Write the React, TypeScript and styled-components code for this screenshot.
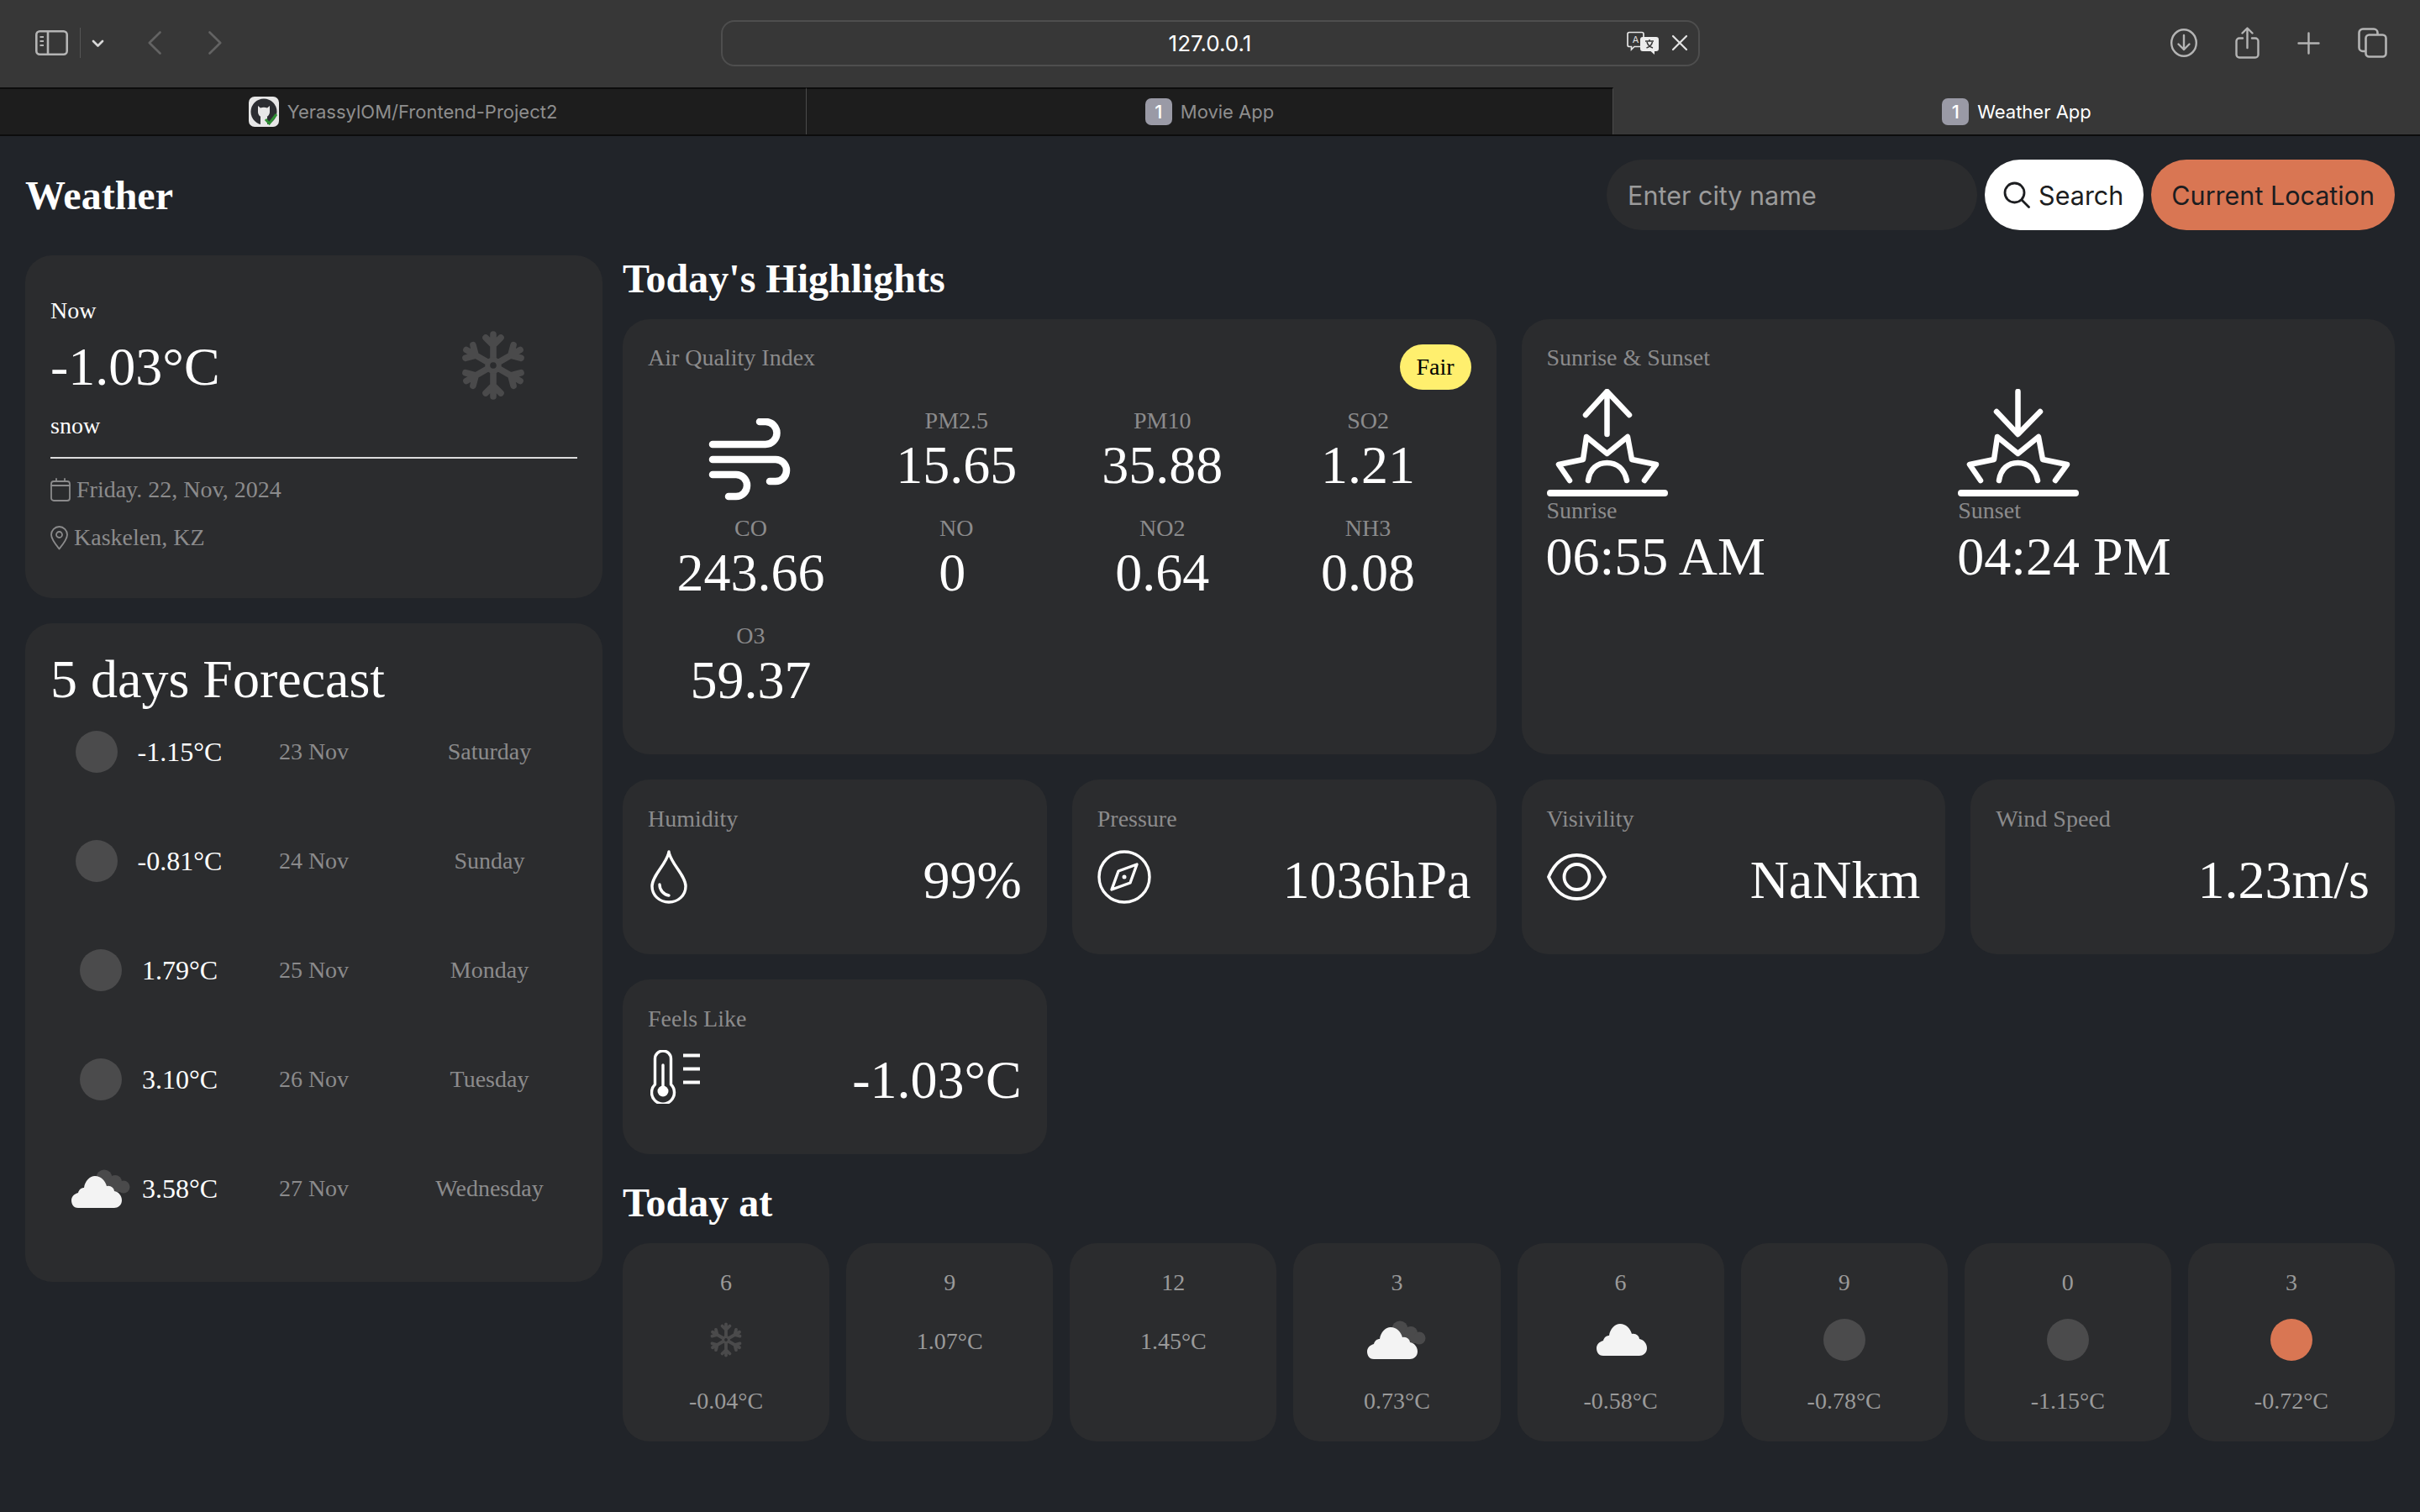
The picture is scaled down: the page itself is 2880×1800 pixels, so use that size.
import React from "react";
import styled, { createGlobalStyle } from "styled-components";

const SERIF = `"Liberation Serif", "Times New Roman", serif`;
const SANS = `Inter, "Liberation Sans", sans-serif`;
const GREY = "#8b8b8c";
const SUN_GREY = "#4b4b4c";
const ORANGE = "#d97653";

const Global = createGlobalStyle`
  html, body { margin: 0; padding: 0; background: #212429; }
  body { font-family: ${SERIF}; color: #fff; }
  * { box-sizing: border-box; }
`;

const Shell = styled.div`
  width: 2880px;
  height: 1800px;
  overflow: hidden;
  background: #212429;
`;

/* ---------- browser chrome ---------- */
const Toolbar = styled.div`
  height: 104px;
  background: #373737;
  display: grid;
  grid-template-columns: 1fr 1165px 1fr;
  align-items: center;
  padding-bottom: 2px;
`;
const ToolLeft = styled.div`
  display: flex;
  align-items: center;
  padding-left: 42px;
`;
const ToolRight = styled.div`
  display: flex;
  align-items: center;
  justify-content: flex-end;
  gap: 45px;
  padding-right: 39px;
`;
const ToolDivider = styled.span`
  width: 1px;
  height: 36px;
  background: #565656;
  margin: 0 13px 0 14px;
`;
const NavIcon = styled.svg<{ $left: number }>`
  margin-left: ${(p) => p.$left}px;
  display: block;
`;
const AddressBar = styled.div`
  height: 55px;
  border: 2px solid #4e4e4e;
  border-radius: 16px;
  display: grid;
  grid-template-columns: 1fr auto 1fr;
  align-items: center;
`;
const Url = styled.span`
  font: 400 26px ${SANS};
  letter-spacing: 0;
  color: #fff;
`;
const AddressActions = styled.div`
  display: flex;
  justify-content: flex-end;
  align-items: center;
  gap: 15px;
  padding-right: 12px;
`;
const TabBar = styled.div`
  height: 58px;
  display: grid;
  grid-template-columns: repeat(3, 1fr);
  border-bottom: 2px solid #0c0c0c;
`;
const Tab = styled.div<{ $active?: boolean }>`
  background: ${(p) => (p.$active ? "#373737" : "#1d1d1d")};
  border-top: 2px solid ${(p) => (p.$active ? "#373737" : "#0c0c0c")};
  border-right: ${(p) => (p.$active ? "0" : "1px solid #4a4a4a")};
  color: ${(p) => (p.$active ? "#fff" : "#8e8e8e")};
  display: flex;
  align-items: center;
  justify-content: center;
  gap: 10px;
  font: 400 22px ${SANS};
`;
const TabCount = styled.span`
  width: 32px;
  height: 32px;
  border-radius: 7px;
  background: #9a9aa6;
  color: #fff;
  font: 500 22px ${SANS};
  display: flex;
  align-items: center;
  justify-content: center;
`;

/* ---------- page ---------- */
const Header = styled.header`
  display: flex;
  align-items: center;
  justify-content: space-between;
  padding: 28px 30px 30px;
`;
const Brand = styled.h1`
  margin: 0;
  font: 700 48px ${SERIF};
`;
const SearchGroup = styled.div`
  display: flex;
  gap: 9px;
`;
const CityInput = styled.input`
  width: 441px;
  height: 84px;
  border: 0;
  outline: 0;
  border-radius: 42px;
  background: #2b2c2e;
  padding: 0 25px;
  color: #fff;
  font: 400 30.5px ${SANS};
  &::placeholder { color: #9b9b9b; opacity: 1; }
`;
const PillButton = styled.button<{ $accent?: boolean }>`
  height: 84px;
  border: 0;
  border-radius: 42px;
  padding: 0 24px 0 ${(p) => (p.$accent ? 24 : 22)}px;
  display: flex;
  align-items: center;
  gap: 10px;
  background: ${(p) => (p.$accent ? ORANGE : "#fff")};
  color: #1c1d20;
  font: 400 30.5px ${SANS};
`;
const Main = styled.main`
  display: grid;
  grid-template-columns: 687px 1fr;
  gap: 24px;
  padding: 0 30px;
  align-items: start;
`;
const LeftColumn = styled.aside`
  display: flex;
  flex-direction: column;
  gap: 30px;
`;
const RightColumn = styled.section`
  display: flex;
  flex-direction: column;
`;
const Card = styled.div`
  background: #2b2c2e;
  border-radius: 32px;
`;

/* now card */
const NowCard = styled(Card)`
  height: 408px;
  padding: 50px 30px 0;
`;
const NowTop = styled.div`
  display: flex;
  justify-content: space-between;
  align-items: center;
`;
const NowText = styled.div`
  display: flex;
  flex-direction: column;
`;
const NowSlot = styled.div`
  width: 200px;
  height: 160px;
  display: flex;
  align-items: center;
  justify-content: center;
  margin-bottom: 7px;
`;
const Small = styled.div<{ $top?: number }>`
  font-size: 28px;
  line-height: 32px;
  margin-top: ${(p) => p.$top ?? 0}px;
`;
const NowTemp = styled.div`
  font-size: 64px;
  line-height: 74px;
  margin-top: 14px;
`;
const Rule = styled.hr`
  border: 0;
  height: 2px;
  background: #dcdcdc;
  margin: 21px 0 21px;
`;
const MetaRow = styled.div<{ $top?: number; $gap: number }>`
  display: flex;
  align-items: center;
  gap: ${(p) => p.$gap}px;
  color: ${GREY};
  font-size: 28px;
  line-height: 32px;
  margin-top: ${(p) => p.$top ?? 0}px;
`;

/* forecast */
const ForecastCard = styled(Card)`
  height: 784px;
  padding: 30px 30px 0;
`;
const ForecastTitle = styled.h2`
  margin: 0 0 9px;
  font: 400 64px/74px ${SERIF};
`;
const ForecastList = styled.div`
  display: flex;
  flex-direction: column;
  gap: 50px;
`;
const ForecastRow = styled.div`
  display: grid;
  grid-template-columns: repeat(3, 1fr);
  align-items: center;
  height: 80px;
  text-align: center;
`;
const ForecastTemp = styled.div`
  display: flex;
  align-items: center;
  justify-content: center;
  gap: 9px;
  padding-left: 10px;
  font-size: 32px;
`;
const ForecastMuted = styled.div`
  font-size: 28px;
  color: ${GREY};
`;

/* highlights */
const SectionTitle = styled.h2`
  margin: 0 0 21px;
  padding-top: 1px;
  font: 700 48px/54px ${SERIF};
`;
const HighlightRow = styled.div`
  display: grid;
  grid-template-columns: 1fr 1fr;
  gap: 30px;
`;
const LargeCard = styled(Card)`
  height: 518px;
  padding: 30px 30px 0;
`;
const CardHead = styled.div`
  display: flex;
  justify-content: space-between;
  align-items: flex-start;
  margin-bottom: 21px;
`;
const Muted = styled.div`
  color: ${GREY};
  font-size: 28px;
  line-height: 32px;
`;
const Badge = styled.span`
  width: 85px;
  height: 54px;
  border-radius: 27px;
  background: #ffef6e;
  color: #000;
  font-size: 28px;
  display: flex;
  align-items: center;
  justify-content: center;
`;
const AirGrid = styled.div`
  display: grid;
  grid-template-columns: repeat(4, 1fr);
  row-gap: 22px;
  text-align: center;
`;
const WindSlot = styled.div`
  display: flex;
  justify-content: center;
  margin: 13px 0 -5px;
`;
const BigValue = styled.div<{ $shift?: number }>`
  font-size: 64px;
  line-height: 74px;
  padding-right: ${(p) => p.$shift ?? 0}px;
`;
const SunGrid = styled.div`
  display: grid;
  grid-template-columns: 1fr 1fr;
`;
const SunIconWrap = styled.svg`
  display: block;
  margin-bottom: 1px;
`;
const SunTime = styled(BigValue)`
  margin: 2px 0 0 -1px;
`;
const StatGrid = styled.div`
  display: grid;
  grid-template-columns: 1fr 1fr;
  gap: 30px;
`;
const StatCard = styled(Card)`
  height: 208px;
  padding: 31px 30px 0;
`;
const StatBody = styled.div`
  display: flex;
  justify-content: space-between;
  align-items: flex-start;
  margin-top: 20px;
  min-height: 74px;
`;
const StatValue = styled.div`
  font-size: 64px;
  line-height: 74px;
  margin-left: auto;
`;
const StatIcon = styled.svg<{ $left: number; $top: number }>`
  display: block;
  margin: ${(p) => p.$top}px 0 0 ${(p) => p.$left}px;
`;
const Spaced = styled.div`
  margin-top: 30px;
`;
const HourGrid = styled.div`
  display: grid;
  grid-template-columns: repeat(8, 1fr);
  gap: 20px;
`;
const HourCard = styled(Card)`
  height: 236px;
  padding-top: 31px;
  display: flex;
  flex-direction: column;
  align-items: center;
  color: #9a9a9a;
  font-size: 28px;
  line-height: 32px;
`;
const HourSlot = styled.div`
  height: 33px;
  margin: 35px 0 3px;
  display: flex;
  align-items: center;
  justify-content: center;
  svg { flex-shrink: 0; }
`;
const HourTemp = styled.div`
  margin-top: 38px;
`;

/* ---------- icons ---------- */
const Snow = ({ size }: { size: number }) => (
  <svg width={size} height={size} viewBox="0 0 80 80" fill="none" stroke="#4a4a4b" strokeWidth="3.8" strokeLinecap="round" strokeLinejoin="round">
    {[0, 60, 120, 180, 240, 300].map((a) => (
      <g key={a} transform={`rotate(${a} 40 40)`}>
        <path d="M40 36V21.5M35.5 23.5 40 28l4.5-4.5" />
      </g>
    ))}
    <circle cx="40" cy="40" r="3.4" strokeWidth="3" />
  </svg>
);
const Sun = ({ color }: { color: string }) => (
  <svg width="80" height="80" viewBox="0 0 80 80">
    <circle cx="40" cy="40" r="25" fill={color} />
  </svg>
);
const WHITE_CLOUD = "M13 63C7 63 5 58 5 54c0-5 4-8 8-9 1-4 4-6 7-6 1-8 7-14 13-14 7 0 12 5 14 12 5-1 9 3 9 6 5 1 9 5 9 11 0 6-5 9-9 9z";
const Clouds = () => (
  <svg width="80" height="80" viewBox="0 0 80 80">
    <g fill="#4a4a4b">
      <circle cx="44" cy="27" r="9.5" />
      <circle cx="57" cy="32" r="8" />
      <circle cx="67" cy="38" r="7.5" />
      <rect x="48" y="34" width="18" height="10" />
    </g>
    <path d={WHITE_CLOUD} fill="#f3f3f3" />
  </svg>
);
const Cloud = () => (
  <svg width="80" height="80" viewBox="0 0 80 80">
    <path d={WHITE_CLOUD} fill="#f3f3f3" transform="translate(6 -4)" />
  </svg>
);
const WeatherIcon = ({ kind }: { kind: string }) => {
  if (kind === "sun") return <Sun color={SUN_GREY} />;
  if (kind === "sunOrange") return <Sun color={ORANGE} />;
  if (kind === "clouds") return <Clouds />;
  if (kind === "cloud") return <Cloud />;
  if (kind === "snow") return <Snow size={80} />;
  return null;
};
const SunBurst = () => (
  <g>
    <path d="M27 109 14 90 43 84 47 57 71.5 77 96 57 101 84 130 90 116 109" />
    <path d="M49 109c2-14 11-21 22.5-21S92 95 95 109" />
    <path d="M4 124H140" strokeWidth="8" />
  </g>
);
const SunriseIcon = () => (
  <SunIconWrap width="144" height="128" viewBox="0 0 144 128" fill="none" stroke="#fff" strokeWidth="6.5" strokeLinecap="round" strokeLinejoin="round">
    <path d="M71.5 54V4M46 31 71.5 3 98 31" />
    <SunBurst />
  </SunIconWrap>
);
const SunsetIcon = () => (
  <SunIconWrap width="144" height="128" viewBox="0 0 144 128" fill="none" stroke="#fff" strokeWidth="6.5" strokeLinecap="round" strokeLinejoin="round">
    <path d="M71.5 3V52M46 27 71.5 54 98 27" />
    <SunBurst />
  </SunIconWrap>
);
const Wind = () => (
  <svg width="100" height="98" viewBox="10 8 100 98" fill="none" stroke="#fff" strokeWidth="8.5" strokeLinecap="round">
    <path d="M15 39H78A13.5 13.5 0 0 0 78 12H71" />
    <path d="M15 57H90A13 13 0 0 1 90 83H83" />
    <path d="M15 75H43A13 13 0 0 1 43 101H34" />
  </svg>
);

const data = {
  air: [
    ["PM2.5", "15.65"], ["PM10", "35.88"], ["SO2", "1.21"],
    ["CO", "243.66"], ["NO", "0"], ["NO2", "0.64"], ["NH3", "0.08"], ["O3", "59.37"],
  ],
  forecast: [
    ["sun", "-1.15°C", "23 Nov", "Saturday"],
    ["sun", "-0.81°C", "24 Nov", "Sunday"],
    ["sun", "1.79°C", "25 Nov", "Monday"],
    ["sun", "3.10°C", "26 Nov", "Tuesday"],
    ["clouds", "3.58°C", "27 Nov", "Wednesday"],
  ],
  hours: [
    ["6", "snow", "-0.04°C"], ["9", "", "1.07°C"], ["12", "", "1.45°C"], ["3", "clouds", "0.73°C"],
    ["6", "cloud", "-0.58°C"], ["9", "sun", "-0.78°C"], ["0", "sun", "-1.15°C"], ["3", "sunOrange", "-0.72°C"],
  ],
};

export default function App() {
  return (
    <Shell>
      <Global />
      <Toolbar>
        <ToolLeft>
          <svg width="39" height="30" viewBox="0 0 39 30" fill="none" stroke="#b4b4b4" strokeWidth="2.6">
            <rect x="1.3" y="1.3" width="36.4" height="27.4" rx="4" />
            <path d="M15 1.5V28.5" />
            <path d="M5.5 8H10M5.5 13H10M5.5 18H10" strokeWidth="2" />
          </svg>
          <ToolDivider />
          <svg width="15" height="9" viewBox="0 0 15 9" fill="none" stroke="#d8d8d8" strokeWidth="2.6" strokeLinecap="round" strokeLinejoin="round">
            <path d="M2 2l5.500 5.500L13 2" />
          </svg>
          <NavIcon $left={52} width="16" height="28" viewBox="0 0 16 28" fill="none" stroke="#636363" strokeWidth="2.6" strokeLinecap="round" strokeLinejoin="round">
            <path d="M14.500 1.500 1.800 14l12.700 12.500" />
          </NavIcon>
          <NavIcon $left={56} width="16" height="28" viewBox="0 0 16 28" fill="none" stroke="#636363" strokeWidth="2.6" strokeLinecap="round" strokeLinejoin="round">
            <path d="M1.500 1.500 14.200 14 1.500 26.500" />
          </NavIcon>
        </ToolLeft>
        <AddressBar>
          <span />
          <Url>127.0.0.1</Url>
          <AddressActions>
            <svg width="38" height="28" viewBox="0 0 38 28">
              <path d="M3 1.500h15a2 2 0 0 1 2 2v13a2 2 0 0 1-2 2H9l-3.500 3.500V18.500H3a2 2 0 0 1-2-2v-13a2 2 0 0 1 2-2z" fill="none" stroke="#e4e4e4" strokeWidth="1.7" />
              <text x="10.500" y="14" textAnchor="middle" fontFamily="Inter, sans-serif" fontSize="11" fill="#e4e4e4">A</text>
              <path d="M19 7h16a3 3 0 0 1 3 3v11a3 3 0 0 1-3 3h-2v4l-4.500-4H19a3 3 0 0 1-3-3V10a3 3 0 0 1 3-3z" fill="#ececec" />
              <path d="M22 12h10M27 10v2M24 13c1 4 4 6 7 7M30.500 13c-1 4-4 6-7 7" fill="none" stroke="#373737" strokeWidth="1.500" />
            </svg>
            <svg width="20" height="20" viewBox="0 0 20 20" fill="none" stroke="#e4e4e4" strokeWidth="2.2" strokeLinecap="round">
              <path d="M2 2l16 16M18 2 2 18" />
            </svg>
          </AddressActions>
        </AddressBar>
        <ToolRight>
          <svg width="32" height="34" viewBox="0 0 32 34" fill="none" stroke="#b4b4b4" strokeWidth="2.4" strokeLinecap="round" strokeLinejoin="round">
            <ellipse cx="16" cy="17" rx="14.800" ry="15.800" />
            <path d="M16 8v17M9.500 18.500 16 25l6.500-6.500" />
          </svg>
          <svg width="29" height="38" viewBox="0 0 29 38" fill="none" stroke="#b4b4b4" strokeWidth="2.4" strokeLinecap="round" strokeLinejoin="round">
            <path d="M9 13.500H5a3.500 3.500 0 0 0-3.500 3.500v16A3.500 3.500 0 0 0 5 36.500h19a3.500 3.500 0 0 0 3.500-3.500V17a3.500 3.500 0 0 0-3.500-3.500h-4" />
            <path d="M14.500 25V2M8.500 7.500l6-6 6 6" />
          </svg>
          <svg width="27" height="27" viewBox="0 0 27 27" fill="none" stroke="#b4b4b4" strokeWidth="2.400" strokeLinecap="round">
            <path d="M13.500 1.500v24M1.500 13.500h24" />
          </svg>
          <svg width="35" height="36" viewBox="0 0 35 36" fill="none" stroke="#b4b4b4" strokeWidth="2.600" strokeLinejoin="round">
            <rect x="9.500" y="8.500" width="24" height="26" rx="4" />
            <path d="M9.500 28H6a4.500 4.500 0 0 1-4.500-4.500V6A4.500 4.500 0 0 1 6 1.500h13A4.500 4.500 0 0 1 23.500 6v2.500" />
          </svg>
        </ToolRight>
      </Toolbar>
      <TabBar>
        <Tab>
          <svg width="36" height="36" viewBox="0 0 36 36">
            <rect width="36" height="36" rx="7" fill="#e7e7e7" />
            <circle cx="18" cy="18" r="15.500" fill="#2b2d31" />
            <path d="M11 11l3 2.500c2.500-1 5.500-1 8 0l3-2.500v7c0 4-3 7-7 7s-7-3-7-7z" fill="#e7e7e7" />
            <path d="M14 24h8v10h-8z" fill="#e7e7e7" />
            <path d="M20 27l4.500 5L33 21" fill="none" stroke="#2f8f35" strokeWidth="3" />
          </svg>
          YerassylOM/Frontend-Project2
        </Tab>
        <Tab>
          <TabCount>1</TabCount>
          Movie App
        </Tab>
        <Tab $active>
          <TabCount>1</TabCount>
          Weather App
        </Tab>
      </TabBar>

      <Header>
        <Brand>Weather</Brand>
        <SearchGroup>
          <CityInput placeholder="Enter city name" />
          <PillButton>
            <svg width="32" height="32" viewBox="0 0 32 32" fill="none" stroke="#1c1d20" strokeWidth="2.800" strokeLinecap="round">
              <circle cx="13.500" cy="13.500" r="11.500" />
              <path d="M22 22l8.500 8.500" />
            </svg>
            Search
          </PillButton>
          <PillButton $accent>Current Location</PillButton>
        </SearchGroup>
      </Header>

      <Main>
        <LeftColumn>
          <NowCard>
            <NowTop>
              <NowText>
                <Small>Now</Small>
                <NowTemp>-1.03°C</NowTemp>
                <Small $top={17}>snow</Small>
              </NowText>
              <NowSlot>
                <Snow size={160} />
              </NowSlot>
            </NowTop>
            <Rule />
            <MetaRow $gap={7}>
              <svg width="24" height="28" viewBox="0 0 24 28" fill="none" stroke={GREY} strokeWidth="1.800" strokeLinecap="round">
                <rect x="1" y="4" width="22" height="23" rx="3" />
                <path d="M1 9h22M7 1v3M17 1v3" />
              </svg>
              Friday. 22, Nov, 2024
            </MetaRow>
            <MetaRow $top={25} $gap={7}>
              <svg width="21" height="29" viewBox="0 0 21 29" fill="none" stroke={GREY} strokeWidth="1.800">
                <path d="M10.500 27.500C6 22 1 16 1 10.500a9.500 9.500 0 0 1 19 0C20 16 15 22 10.500 27.500z" strokeLinejoin="round" />
                <circle cx="10.500" cy="10.500" r="3.500" />
              </svg>
              Kaskelen, KZ
            </MetaRow>
          </NowCard>

          <ForecastCard>
            <ForecastTitle>5 days Forecast</ForecastTitle>
            <ForecastList>
              {data.forecast.map(([icon, temp, date, day]) => (
                <ForecastRow key={date}>
                  <ForecastTemp>
                    <WeatherIcon kind={icon} />
                    {temp}
                  </ForecastTemp>
                  <ForecastMuted>{date}</ForecastMuted>
                  <ForecastMuted>{day}</ForecastMuted>
                </ForecastRow>
              ))}
            </ForecastList>
          </ForecastCard>
        </LeftColumn>

        <RightColumn>
          <SectionTitle>Today's Highlights</SectionTitle>
          <HighlightRow>
            <LargeCard>
              <CardHead>
                <Muted>Air Quality Index</Muted>
                <Badge>Fair</Badge>
              </CardHead>
              <AirGrid>
                <WindSlot>
                  <Wind />
                </WindSlot>
                {data.air.map(([label, value]) => (
                  <div key={label}>
                    <Muted>{label}</Muted>
                    <BigValue $shift={value === "0" ? 10 : 0}>{value}</BigValue>
                  </div>
                ))}
              </AirGrid>
            </LargeCard>
            <LargeCard>
              <CardHead>
                <Muted>Sunrise &amp; Sunset</Muted>
              </CardHead>
              <SunGrid>
                <div>
                  <SunriseIcon />
                  <Muted>Sunrise</Muted>
                  <SunTime>06:55 AM</SunTime>
                </div>
                <div>
                  <SunsetIcon />
                  <Muted>Sunset</Muted>
                  <SunTime>04:24 PM</SunTime>
                </div>
              </SunGrid>
            </LargeCard>
          </HighlightRow>
          <Spaced>
            <HighlightRow>
              <StatGrid>
                <StatCard>
                  <Muted>Humidity</Muted>
                  <StatBody>
                    <StatIcon $left={3} $top={1} width="44" height="64" viewBox="0 0 44 64" fill="none" stroke="#fff" strokeWidth="3.400" strokeLinecap="round" strokeLinejoin="round">
                      <path d="M22 2C20 16 2 30 2 43c0 11 9 19 20 19s20-8 20-19C42 30 24 16 22 2z" />
                      <path d="M11 41c0 7 5 12 11 13" />
                    </StatIcon>
                    <StatValue>99%</StatValue>
                  </StatBody>
                </StatCard>
                <StatCard>
                  <Muted>Pressure</Muted>
                  <StatBody>
                    <StatIcon $left={0} $top={1} width="64" height="64" viewBox="0 0 64 64" fill="none" stroke="#fff" strokeWidth="3.400" strokeLinejoin="round">
                      <circle cx="32" cy="32" r="30" />
                      <path d="M47 17 39 39 17 47 25 25z" />
                      <circle cx="32" cy="32" r="2.500" fill="#fff" stroke="none" />
                    </StatIcon>
                    <StatValue>1036hPa</StatValue>
                  </StatBody>
                </StatCard>
              </StatGrid>
              <StatGrid>
                <StatCard>
                  <Muted>Visivility</Muted>
                  <StatBody>
                    <StatIcon $left={0} $top={5} width="71" height="56" viewBox="0 0 71 56" fill="none" stroke="#fff" strokeWidth="3.800">
                      <path d="M2 28C10 9 23 2 35.500 2S61 9 69 28C61 47 48 54 35.500 54S10 47 2 28z" strokeLinejoin="round" />
                      <circle cx="35.500" cy="28" r="15" />
                    </StatIcon>
                    <StatValue>NaNkm</StatValue>
                  </StatBody>
                </StatCard>
                <StatCard>
                  <Muted>Wind Speed</Muted>
                  <StatBody>
                    <StatValue>1.23m/s</StatValue>
                  </StatBody>
                </StatCard>
              </StatGrid>
            </HighlightRow>
          </Spaced>
          <Spaced>
            <HighlightRow>
              <StatGrid>
                <StatCard>
                  <Muted>Feels Like</Muted>
                  <StatBody>
                    <StatIcon $left={3} $top={1} width="62" height="64" viewBox="0 0 62 64" fill="none" stroke="#fff" strokeWidth="3.400" strokeLinecap="round">
                      <path d="M5.500 41V10.500a9.500 9.500 0 0 1 19 0V41a13.500 13.500 0 1 1-19 0z" strokeLinejoin="round" />
                      <path d="M15 18V44" />
                      <circle cx="15" cy="49" r="6.500" fill="#fff" stroke="none" />
                      <path d="M39 6.500H59M39 22.500H59M39 38.500H59" strokeLinecap="butt" strokeWidth="3.800" />
                    </StatIcon>
                    <StatValue>-1.03°C</StatValue>
                  </StatBody>
                </StatCard>
              </StatGrid>
            </HighlightRow>
          </Spaced>
          <Spaced>
            <SectionTitle>Today at</SectionTitle>
            <HourGrid>
              {data.hours.map(([hour, icon, temp], i) => (
                <HourCard key={i}>
                  <div>{hour}</div>
                  {icon && (
                    <HourSlot>
                      <WeatherIcon kind={icon} />
                    </HourSlot>
                  )}
                  <HourTemp>{temp}</HourTemp>
                </HourCard>
              ))}
            </HourGrid>
          </Spaced>
        </RightColumn>
      </Main>
    </Shell>
  );
}
